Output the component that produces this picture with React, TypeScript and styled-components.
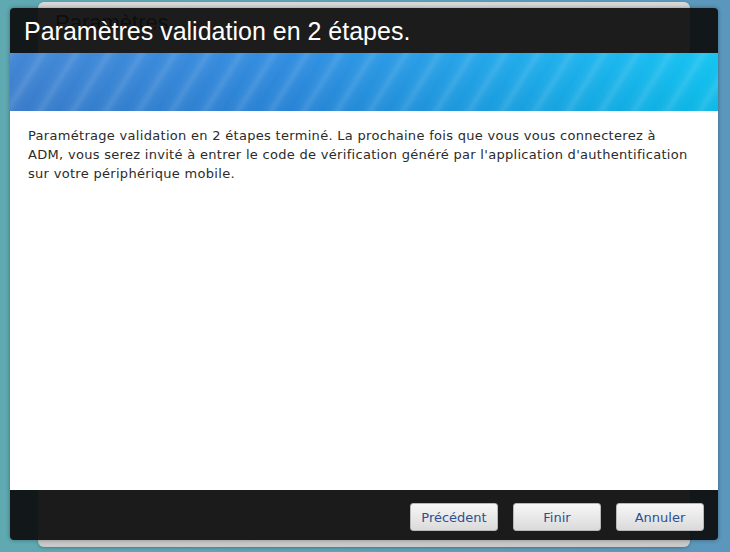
import React from 'react';
import styled, { createGlobalStyle } from 'styled-components';

const GlobalStyle = createGlobalStyle`
  html, body {
    margin: 0;
    padding: 0;
  }
  body {
    width: 730px;
    height: 552px;
    overflow: hidden;
  }
`;

const App = () => {
  return (
    <Desktop>
      <GlobalStyle />

      <BackWindow>
        <BackTitle>Paramètres</BackTitle>
      </BackWindow>

      <Dialog>
        <Header>
          <Title>Paramètres validation en 2 étapes.</Title>
        </Header>

        <Banner />

        <Body>
          <Message>
            Paramétrage validation en 2 étapes terminé. La prochaine fois que vous vous connecterez à
            <br />
            ADM, vous serez invité à entrer le code de vérification généré par l'application d'authentification
            <br />
            sur votre périphérique mobile.
          </Message>
        </Body>

        <Footer>
          <Button>Précédent</Button>
          <Button>Finir</Button>
          <Button>Annuler</Button>
        </Footer>
      </Dialog>
    </Desktop>
  );
};

export default App;

const Desktop = styled.div`
  position: relative;
  width: 730px;
  height: 552px;
  overflow: hidden;
  background: linear-gradient(90deg, #5fa9b1 0%, #5ea2b6 50%, #5b97bd 100%);
`;

const BackWindow = styled.div`
  position: absolute;
  left: 38px;
  top: 2px;
  width: 652px;
  height: 545px;
  border-radius: 6px;
  background: linear-gradient(180deg, #d8d8d8 0%, #c9c9c9 100%);
  box-shadow: 0 1px 3px rgba(0, 0, 0, 0.25);
  box-sizing: border-box;
  padding: 8px 0 0 17px;
`;

const BackTitle = styled.div`
  font-family: "Liberation Sans", Arial, sans-serif;
  font-size: 22px;
  color: #2a2a2a;
`;

const Dialog = styled.div`
  position: absolute;
  left: 10px;
  top: 8px;
  width: 708px;
  height: 532px;
  display: flex;
  flex-direction: column;
  border-radius: 4px;
  overflow: hidden;
  box-shadow: 0 0 4px rgba(0, 0, 0, 0.35);
`;

const Header = styled.div`
  height: 45px;
  display: flex;
  align-items: center;
  padding-left: 14px;
  background: rgba(12, 12, 12, 0.92);
`;

const Title = styled.h1`
  margin: 0;
  font-family: "Liberation Sans", Arial, sans-serif;
  font-weight: normal;
  font-size: 25px;
  color: #ffffff;
  padding-top: 2px;
`;

const Banner = styled.div`
  height: 58px;
  background:
    repeating-linear-gradient(
      -58deg,
      rgba(255, 255, 255, 0) 0px,
      rgba(255, 255, 255, 0.03) 9px,
      rgba(255, 255, 255, 0.12) 15px,
      rgba(255, 255, 255, 0.03) 21px,
      rgba(255, 255, 255, 0) 28px
    ),
    linear-gradient(180deg, rgba(255, 255, 255, 0.04) 0%, rgba(0, 0, 0, 0.05) 100%),
    linear-gradient(90deg, #3c82d4 0%, #2a8ae0 40%, #1aa6ea 70%, #0cc2f2 100%);
`;

const Body = styled.div`
  flex: 1;
  background: #ffffff;
  padding: 15px 18px;
`;

const Message = styled.p`
  margin: 0;
  font-family: "DejaVu Sans", Verdana, sans-serif;
  font-size: 13px;
  letter-spacing: 0.3px;
  line-height: 19px;
  color: #2b2b2b;
  white-space: nowrap;
`;

const Footer = styled.div`
  height: 50px;
  display: flex;
  align-items: center;
  justify-content: flex-end;
  gap: 15px;
  padding: 4px 14px 0 0;
  box-sizing: border-box;
  background: rgba(12, 12, 12, 0.92);
`;

const Button = styled.button`
  width: 88px;
  height: 28px;
  border: 1px solid #b8b8b8;
  border-radius: 3px;
  background: linear-gradient(180deg, #f7f7f7 0%, #e6e6e6 60%, #dadada 100%);
  font-family: "DejaVu Sans", Verdana, sans-serif;
  font-size: 13px;
  color: #2d4f92;
  cursor: pointer;
  padding: 0;
`;
